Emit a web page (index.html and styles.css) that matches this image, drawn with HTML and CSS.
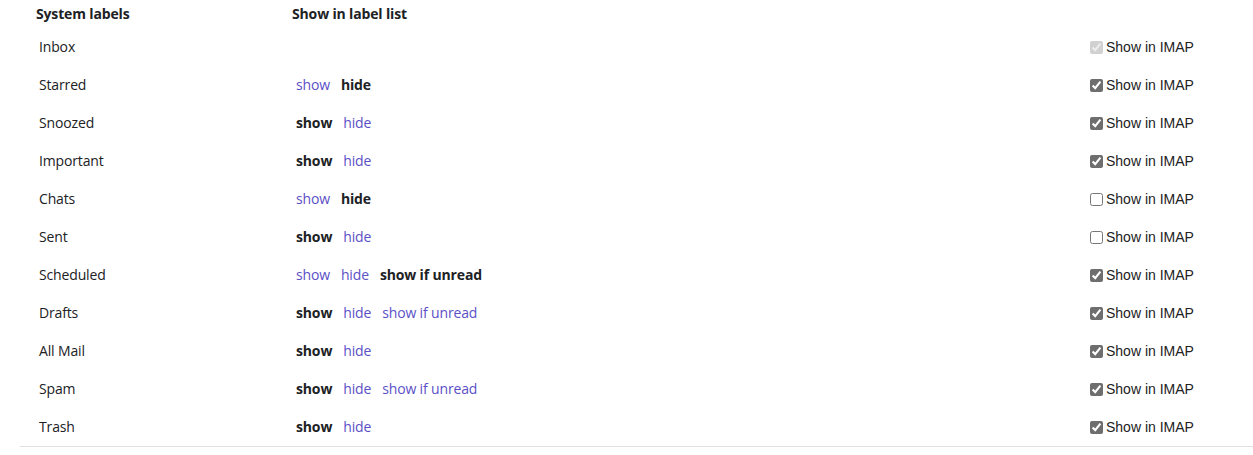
FILE: index.html
```html
<!DOCTYPE html>
<html>
<head>
<meta charset="utf-8">
<link rel="stylesheet" href="styles.css">
</head>
<body>
<div class="table">
  <div class="row head">
    <div class="c1">System labels</div>
    <div class="c2">Show in label list</div>
    <div class="c3"></div>
  </div>
  <div class="row">
    <div class="c1">Inbox</div>
    <div class="c2"></div>
    <div class="c3"><label><input type="checkbox" checked disabled>Show in IMAP</label></div>
  </div>
  <div class="row">
    <div class="c1">Starred</div>
    <div class="c2"><a>show</a><b>hide</b></div>
    <div class="c3"><label><input type="checkbox" checked>Show in IMAP</label></div>
  </div>
  <div class="row">
    <div class="c1">Snoozed</div>
    <div class="c2"><b>show</b><a>hide</a></div>
    <div class="c3"><label><input type="checkbox" checked>Show in IMAP</label></div>
  </div>
  <div class="row">
    <div class="c1">Important</div>
    <div class="c2"><b>show</b><a>hide</a></div>
    <div class="c3"><label><input type="checkbox" checked>Show in IMAP</label></div>
  </div>
  <div class="row">
    <div class="c1">Chats</div>
    <div class="c2"><a>show</a><b>hide</b></div>
    <div class="c3"><label><input type="checkbox">Show in IMAP</label></div>
  </div>
  <div class="row">
    <div class="c1">Sent</div>
    <div class="c2"><b>show</b><a>hide</a></div>
    <div class="c3"><label><input type="checkbox">Show in IMAP</label></div>
  </div>
  <div class="row">
    <div class="c1">Scheduled</div>
    <div class="c2"><a>show</a><a>hide</a><b>show if unread</b></div>
    <div class="c3"><label><input type="checkbox" checked>Show in IMAP</label></div>
  </div>
  <div class="row">
    <div class="c1">Drafts</div>
    <div class="c2"><b>show</b><a>hide</a><a>show if unread</a></div>
    <div class="c3"><label><input type="checkbox" checked>Show in IMAP</label></div>
  </div>
  <div class="row">
    <div class="c1">All Mail</div>
    <div class="c2"><b>show</b><a>hide</a></div>
    <div class="c3"><label><input type="checkbox" checked>Show in IMAP</label></div>
  </div>
  <div class="row">
    <div class="c1">Spam</div>
    <div class="c2"><b>show</b><a>hide</a><a>show if unread</a></div>
    <div class="c3"><label><input type="checkbox" checked>Show in IMAP</label></div>
  </div>
  <div class="row last">
    <div class="c1">Trash</div>
    <div class="c2"><b>show</b><a>hide</a></div>
    <div class="c3"><label><input type="checkbox" checked>Show in IMAP</label></div>
  </div>
</div>
</body>
</html>
```
FILE: styles.css
```css
html, body {
  margin: 0;
  background: #fff;
}
body {
  font-family: "Open Sans", Roboto, sans-serif;
  font-size: 14px;
  letter-spacing: -0.15px;
  color: #202124;
}
.table {
  margin-left: 20px;
  width: 1233px;
}
.row {
  display: grid;
  grid-template-columns: 253px 1fr 167px;
  height: 38px;
  align-items: center;
}
.row.head {
  height: 28px;
  font-weight: 700;
}
.row.last {
  border-bottom: 1px solid #e0e0e0;
}
.c1 {
  padding-left: 19px;
  padding-bottom: 2px;
}
.head .c1 {
  padding-left: 16px;
}
.c2 {
  padding-left: 23px;
  padding-bottom: 2px;
  display: flex;
  gap: 11px;
}
.head .c2 {
  padding-left: 19px;
}
.c2 a {
  color: #5b50c6;
  cursor: pointer;
}
.c2 b {
  font-weight: 700;
}
.c3 label {
  display: flex;
  align-items: center;
  font-family: "Liberation Sans", Arial, sans-serif;
  font-size: 14px;
  letter-spacing: 0;
  color: #222;
}
.c3 input {
  margin: 0 3px 0 4px;
  width: 13px;
  height: 13px;
  accent-color: #6e6e6e;
}
```
